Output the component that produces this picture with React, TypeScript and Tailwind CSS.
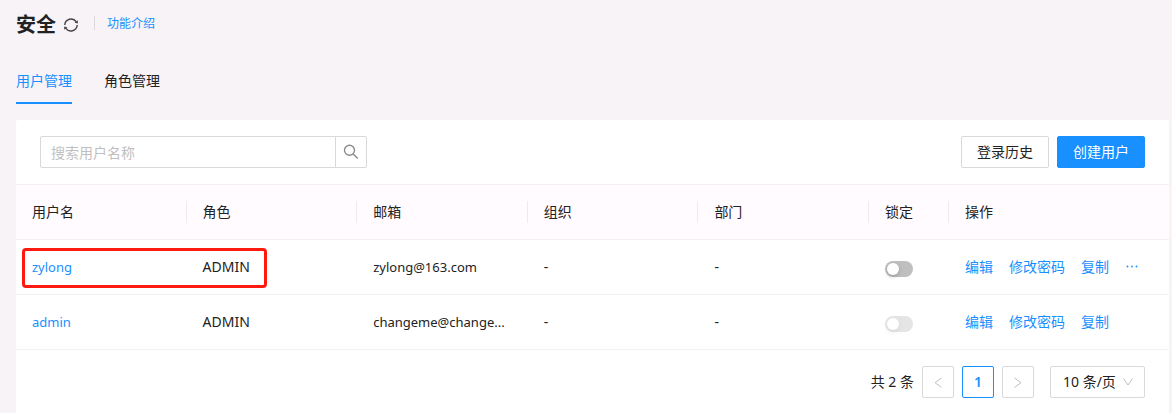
import { useState } from "react";

interface User {
  name: string;
  role: string;
  email: string;
  org: string;
  dept: string;
  locked: boolean;
  lockDisabled?: boolean;
  hasMore?: boolean;
  highlighted?: boolean;
}

const initialUsers: User[] = [
  {
    name: "zylong",
    role: "ADMIN",
    email: "zylong@163.com",
    org: "-",
    dept: "-",
    locked: false,
    hasMore: true,
    highlighted: true,
  },
  {
    name: "admin",
    role: "ADMIN",
    email: "changeme@change...",
    org: "-",
    dept: "-",
    locked: false,
    lockDisabled: true,
  },
];

const columns = [
  { title: "用户名", width: "" },
  { title: "角色", width: "" },
  { title: "邮箱", width: "" },
  { title: "组织", width: "" },
  { title: "部门", width: "" },
  { title: "锁定", width: "w-20" },
  { title: "操作", width: "w-[220px]" },
];

function RefreshIcon() {
  return (
    <svg className="h-4 w-4" viewBox="0 0 16 16" fill="none" stroke="#444" strokeWidth="1.4">
      <path d="M1.8 8A6.3 6.3 0 0 1 13.3 4.8" />
      <path d="M14.2 8A6.3 6.3 0 0 1 2.7 11.2" />
      <path d="M14.8 3.2v3.2l-3.2-.6z" fill="#444" stroke="none" />
      <path d="M1.2 12.8V9.6l3.2.6z" fill="#444" stroke="none" />
    </svg>
  );
}

function SearchIcon() {
  return (
    <svg className="h-4 w-4" viewBox="0 0 16 16" fill="none" stroke="#8c8c8c" strokeWidth="1.4">
      <circle cx="6.5" cy="6.3" r="5" />
      <path d="M10.2 10l4.6 4.6" />
    </svg>
  );
}

function Header() {
  return (
    <header className="flex h-12 items-center px-4 pt-px">
      <h1 className="text-xl font-bold">安全</h1>
      <button className="ml-[7px] cursor-pointer" title="刷新">
        <RefreshIcon />
      </button>
      <span className="mr-3 mb-1 ml-[15px] h-3.5 w-px bg-[#dcd9dc]" />
      <a href="#intro" className="mb-0.5 text-xs text-[#1890ff]">
        功能介绍
      </a>
    </header>
  );
}

function Tabs() {
  const [active, setActive] = useState("用户管理");

  return (
    <nav className="flex gap-8 px-4 pt-3">
      {["用户管理", "角色管理"].map((tab) => (
        <button
          key={tab}
          onClick={() => setActive(tab)}
          className={
            active === tab
              ? "h-11 cursor-pointer border-b-2 border-[#1890ff] text-[#1890ff]"
              : "h-11 cursor-pointer border-b-2 border-transparent"
          }
        >
          {tab}
        </button>
      ))}
    </nav>
  );
}

function Toolbar() {
  return (
    <div className="flex items-center justify-between px-6 py-4">
      <form className="flex" onSubmit={(e) => e.preventDefault()}>
        <input
          type="text"
          aria-label="搜索用户名称"
          placeholder="搜索用户名称"
          className="h-8 w-[296px] rounded-l-xs border border-[#d9d9d9] px-2.5 outline-none placeholder:text-[#bfbfbf]"
        />
        <button
          title="搜索"
          className="-ml-px flex h-8 w-8 cursor-pointer items-center justify-center rounded-r-xs border border-[#d9d9d9]"
        >
          <SearchIcon />
        </button>
      </form>
      <div className="flex gap-2">
        <button className="h-8 cursor-pointer rounded-xs border border-[#d9d9d9] px-[15px]">
          登录历史
        </button>
        <button className="h-8 cursor-pointer rounded-xs border border-[#1890ff] bg-[#1890ff] px-[15px] text-white">
          创建用户
        </button>
      </div>
    </div>
  );
}

function UserTable() {
  const [users, setUsers] = useState(initialUsers);

  const toggleLock = (name: string) => {
    setUsers(users.map((u) => (u.name === name ? { ...u, locked: !u.locked } : u)));
  };

  return (
    <table className="w-full table-fixed border-t border-[#f3f0f3]">
      <thead className="bg-[#fffbff]">
        <tr className="h-[55px] border-b border-[#f3f0f3]">
          {columns.map((col, i) => (
            <th key={col.title} className={`p-0 text-left font-normal ${col.width}`}>
              <div
                className={
                  i < columns.length - 1
                    ? "border-r border-[#eeeaee] pl-4 leading-[22px]"
                    : "pl-4 leading-[22px]"
                }
              >
                {col.title}
              </div>
            </th>
          ))}
        </tr>
      </thead>
      <tbody>
        {users.map((user) => (
          <tr key={user.name} className="h-[55px] border-b border-[#f3f3f3]">
            <td className="relative px-4">
              <a href="#user" className="text-[13px] text-[#1890ff]">
                {user.name}
              </a>
              {user.highlighted && (
                <div className="pointer-events-none absolute top-2 left-1.5 h-10 w-[245px] rounded-sm border-3 border-[#ff1a10]" />
              )}
            </td>
            <td className="px-4">{user.role}</td>
            <td className="px-4 text-[13px] whitespace-nowrap">{user.email}</td>
            <td className="px-4">{user.org}</td>
            <td className="px-4">{user.dept}</td>
            <td className="px-4 pt-1">
              <input
                type="checkbox"
                role="switch"
                aria-label={`锁定 ${user.name}`}
                checked={user.locked}
                disabled={user.lockDisabled}
                onChange={() => toggleLock(user.name)}
                className="block h-4 w-7 cursor-pointer appearance-none rounded-full bg-[#bfbfbf] p-0.5 before:block before:h-3 before:w-3 before:rounded-full before:bg-white before:shadow-[0_2px_4px_rgba(0,35,11,0.2)] checked:bg-[#1890ff] checked:before:ml-3 disabled:cursor-not-allowed disabled:opacity-40"
              />
            </td>
            <td className="px-4">
              <div className="flex gap-4 whitespace-nowrap text-[#1890ff]">
                <a href="#edit">编辑</a>
                <a href="#password">修改密码</a>
                <a href="#copy">复制</a>
                {user.hasMore && (
                  <button title="更多" className="cursor-pointer">
                    <svg className="h-3.5 w-3.5" viewBox="0 0 14 14" fill="currentColor">
                      <circle cx="2.5" cy="6.5" r="0.9" />
                      <circle cx="7" cy="6.5" r="0.9" />
                      <circle cx="11.5" cy="6.5" r="0.9" />
                    </svg>
                  </button>
                )}
              </div>
            </td>
          </tr>
        ))}
      </tbody>
    </table>
  );
}

function Pagination() {
  const arrow =
    "flex h-8 w-8 items-center justify-center rounded-xs border border-[#d9d9d9] text-[#bfbfbf]";

  return (
    <div className="flex items-center justify-end px-6 py-4">
      <span className="mr-2">共 2 条</span>
      <div className="flex gap-2">
        <button disabled title="上一页" className={arrow}>
          <svg className="h-3 w-3" viewBox="0 0 12 12" fill="none" stroke="currentColor">
            <path d="M9.5 2L3 6.7l6.5 4.7" />
          </svg>
        </button>
        <button className="h-8 w-8 rounded-xs border border-[#1890ff] font-semibold text-[#1890ff]">
          1
        </button>
        <button disabled title="下一页" className={arrow}>
          <svg className="h-3 w-3" viewBox="0 0 12 12" fill="none" stroke="currentColor">
            <path d="M2.5 2L9 6.7l-6.5 4.7" />
          </svg>
        </button>
      </div>
      <div className="relative ml-4">
        <select
          aria-label="每页条数"
          className="block h-8 w-[95px] appearance-none rounded-xs border border-[#d9d9d9] bg-white pl-3 outline-none"
        >
          <option>10 条/页</option>
          <option>20 条/页</option>
          <option>50 条/页</option>
        </select>
        <svg
          className="pointer-events-none absolute top-2.5 right-[11px] h-3 w-3 text-[#bfbfbf]"
          viewBox="0 0 12 12"
          fill="none"
          stroke="currentColor"
        >
          <path d="M1.5 2.5L6 9l4.5-6.5" />
        </svg>
      </div>
    </div>
  );
}

export default function App() {
  return (
    <div className="flex min-h-screen flex-col bg-[#f7f3f7] font-['Noto_Sans','Noto_Sans_CJK_SC',sans-serif] text-sm text-[#222]">
      <Header />
      <Tabs />
      <main className="mt-4 mr-[3px] ml-4 flex-1 rounded-t-xs bg-white">
        <Toolbar />
        <UserTable />
        <Pagination />
      </main>
    </div>
  );
}
